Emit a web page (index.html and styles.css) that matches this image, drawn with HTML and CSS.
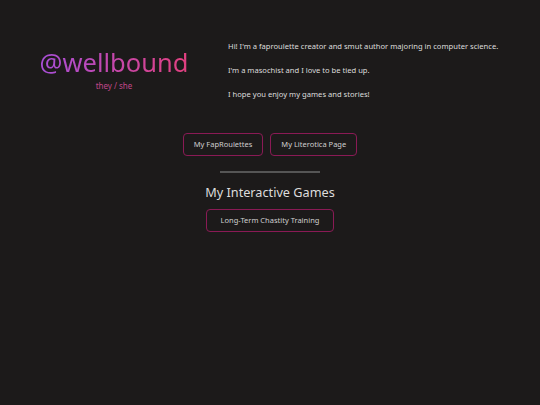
FILE: index.html
```html
<html><head><link rel="stylesheet" href="styles.css"></head><body>
  <main>
    <section class="intro">
      <div class="name">
        <h1 class="handle">@wellbound</h1>
        <p class="pronouns">they / she</p>
      </div>
      <div class="about">
        <p>Hi! I'm a faproulette creator and smut author majoring in computer science.</p>
        <p>I'm a masochist and I love to be tied up.</p>
        <p>I hope you enjoy my games and stories!</p>
      </div>
    </section>
    <nav class="links">
      <a class="btn" href="#">My FapRoulettes</a>
      <a class="btn" href="#">My Literotica Page</a>
    </nav>
    <hr class="divider">
    <h2 class="section-title">My Interactive Games</h2>
    <nav class="links">
      <a class="btn btn-wide" href="#">Long-Term Chastity Training</a>
    </nav>
  </main>
</body></html>
```
FILE: styles.css
```css
body {
  font-family: 'Noto Sans', 'Open Sans', sans-serif;
  background: #1c1a1a;
  color: #dcdcdc;
  margin: 0;
  padding: 0;
}
main {
  padding-top: 40px;
}
.intro {
  display: flex;
  align-items: flex-start;
}
.name {
  width: 228px;
  text-align: center;
  padding-top: 4px;
}
.handle {
  margin: 0;
  font-size: 25.5px;
  line-height: 36px;
  font-weight: 400;
  background: linear-gradient(90deg, #a84fd8, #e2407f);
  -webkit-background-clip: text;
  background-clip: text;
  color: transparent;
  display: inline-block;
}
.pronouns {
  margin: 0;
  font-size: 8px;
  line-height: 12px;
  color: #c0478a;
}
.about {
  flex: 1;
}
.about p {
  margin: 0 0 12px;
  font-size: 7.6px;
  line-height: 12px;
}
.links {
  display: flex;
  justify-content: center;
  gap: 7px;
}
.intro + .links {
  margin-top: 21px;
}
.btn {
  display: inline-block;
  height: 21px;
  line-height: 21px;
  padding: 0 10px;
  border: 1.5px solid #8a1a55;
  border-radius: 4px;
  font-size: 7.5px;
  color: #cfcfcf;
  text-decoration: none;
}
.btn-wide {
  padding: 0 14px;
}
.divider {
  width: 100px;
  height: 2px;
  border: 0;
  background: #555;
  margin: 15px auto 0;
}
.section-title {
  margin: 9px 0 7px;
  text-align: center;
  font-size: 12.7px;
  line-height: 20px;
  font-weight: 400;
  color: #dcdcdc;
}
```
